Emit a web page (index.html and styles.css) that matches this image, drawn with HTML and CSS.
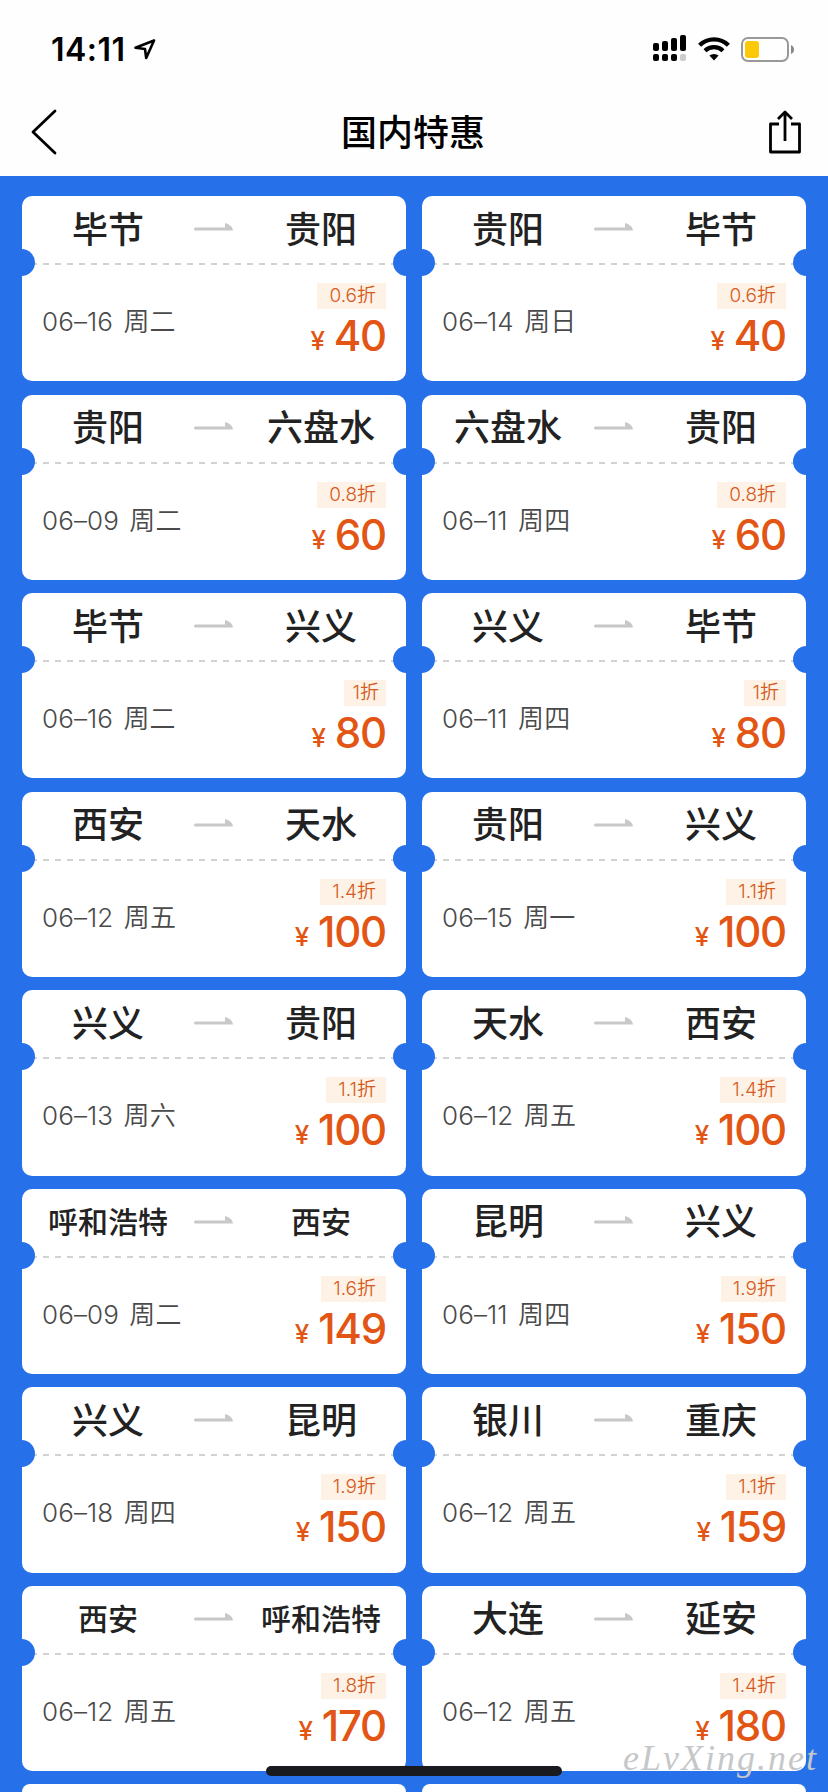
FILE: index.html
```html
<!DOCTYPE html>
<html lang="zh-Hans">
<head>
  <meta charset="UTF-8" />
  <meta name="viewport" content="width=device-width, initial-scale=1" />
  <title>国内特惠</title>
  <link rel="stylesheet" href="styles.css">
</head>
<body>
  <header class="header">
    <div class="status-bar">
      <div class="status-left">
        <span class="time">14:11</span>
        <svg class="location" width="22" height="21" viewBox="0 0 22 21">
          <path d="M20 1.5 L1.5 8.8 L11 10 L12.2 19 Z" fill="none" stroke="#000" stroke-width="2.6" stroke-linejoin="round"/>
        </svg>
      </div>
      <div class="status-right">
        <svg width="34" height="27" viewBox="0 0 34 27">
          <rect x="0" y="8" width="6" height="8" rx="2"/>
          <rect x="9" y="6" width="6" height="10" rx="2"/>
          <rect x="18" y="3" width="6" height="13" rx="2"/>
          <rect x="27" y="0" width="6" height="16" rx="2"/>
          <rect x="0" y="19" width="6" height="7" rx="2"/>
          <rect x="9" y="19" width="6" height="7" rx="2"/>
          <rect x="18" y="19" width="6" height="7" rx="2"/>
          <rect x="27" y="19" width="6" height="7" rx="2" fill="#ccc"/>
        </svg>
        <svg class="wifi" width="32" height="24" viewBox="0 0 32 24">
          <path d="M1.6 8.3 A20.5 20.5 0 0 1 30.4 8.3" fill="none" stroke="#000" stroke-width="4.4"/>
          <path d="M7 13.8 A13 13 0 0 1 25 13.8" fill="none" stroke="#000" stroke-width="4.2"/>
          <path d="M11.4 18.6 A7 7 0 0 1 20.6 18.6 L16 23.4 Z"/>
        </svg>
        <svg class="battery" width="54" height="25" viewBox="0 0 54 25">
          <rect x="1" y="1" width="46" height="23" rx="6" fill="none" stroke="#999" stroke-width="2"/>
          <rect x="4" y="4" width="14" height="17" rx="3" fill="#fbc908"/>
          <path d="M50 8 Q53 9.500 53 12.500 Q53 15.500 50 17 Z" fill="#888"/>
        </svg>
      </div>
    </div>
    <div class="nav">
      <svg width="26" height="46" viewBox="0 0 26 46">
        <path d="M24 2 L2 23 L24 44" fill="none" stroke="#000" stroke-width="2.8" stroke-linecap="round" stroke-linejoin="round"/>
      </svg>
      <h1>国内特惠</h1>
      <svg width="32" height="44" viewBox="0 0 32 44">
        <path d="M10 14 H1.500 V42 H30.500 V14 H22 M16 31 V2 M9 9 L16 2 L23 9" fill="none" stroke="#000" stroke-width="2.8" stroke-linejoin="round"/>
      </svg>
    </div>
  </header>

  <main class="tickets" id="tickets"></main>

  <div class="home-bar"></div>
  <div class="watermark">eLvXing.net</div>

<script>
  const tickets = [
    ['毕节', '贵阳', '06–16 周二', '0.6', 40],
    ['贵阳', '毕节', '06–14 周日', '0.6', 40],
    ['贵阳', '六盘水', '06–09 周二', '0.8', 60],
    ['六盘水', '贵阳', '06–11 周四', '0.8', 60],
    ['毕节', '兴义', '06–16 周二', '1', 80],
    ['兴义', '毕节', '06–11 周四', '1', 80],
    ['西安', '天水', '06–12 周五', '1.4', 100],
    ['贵阳', '兴义', '06–15 周一', '1.1', 100],
    ['兴义', '贵阳', '06–13 周六', '1.1', 100],
    ['天水', '西安', '06–12 周五', '1.4', 100],
    ['呼和浩特', '西安', '06–09 周二', '1.6', 149],
    ['昆明', '兴义', '06–11 周四', '1.9', 150],
    ['兴义', '昆明', '06–18 周四', '1.9', 150],
    ['银川', '重庆', '06–12 周五', '1.1', 159],
    ['西安', '呼和浩特', '06–12 周五', '1.8', 170],
    ['大连', '延安', '06–12 周五', '1.4', 180]
  ];

  const list = document.getElementById('tickets');

  tickets.forEach(([from, to, date, discount, price]) => {
    // 城市名較長時整行縮小字號
    const small = from.length > 3 || to.length > 3 ? ' small' : '';
    const short = discount.length === 1 ? ' short' : '';
    const card = document.createElement('div');
    card.className = 'ticket';
    card.innerHTML = `
      <div class="route${small}">
        <span>${from}</span>
        <svg class="arrow" width="40" height="9" viewBox="0 0 40 9">
          <path d="M1.500 4.500 H31 V0 Q38.500 2 39 7.500 H1.500 A1.500 1.500 0 0 1 1.500 4.500 Z" fill="#c8c8c8"/>
        </svg>
        <span>${to}</span>
      </div>
      <div class="info">
        <span class="date">${date}</span>
        <div class="fare">
          <span class="discount${short}">${discount}折</span>
          <span class="price"><small>¥</small>${price}</span>
        </div>
      </div>
    `;
    list.appendChild(card);
  });

  // 下一行的空卡片
  for (let i = 0; i < 2; i++) {
    const card = document.createElement('div');
    card.className = 'ticket next';
    list.appendChild(card);
  }
</script>
</body>
</html>
```
FILE: styles.css
```css
* {
  box-sizing: border-box;
}

body {
  margin: 0;
  height: 1792px;
  overflow: hidden;
  background-color: #2670e9;
  font-family: Inter, "Noto Sans CJK SC", sans-serif;
}

.header {
  height: 176px;
  background-color: #fefefe;
}

.status-bar {
  display: flex;
  justify-content: space-between;
  height: 88px;
  padding: 35px 33px 0 51px;
}

.status-left,
.status-right {
  display: flex;
  align-items: flex-start;
}

.time {
  font-size: 32px;
  line-height: 30px;
  font-weight: 600;
  letter-spacing: 0.5px;
}

.location {
  margin: 4px 0 0 8px;
}

.wifi {
  margin: 2px 0 0 11px;
}

.battery {
  margin: 2px 0 0 11px;
}

.nav {
  display: flex;
  justify-content: space-between;
  align-items: center;
  height: 88px;
  padding: 0 27px 0 31px;
}

.nav h1 {
  margin: 0 0 4px;
  font-size: 36px;
  font-weight: 500;
}

.tickets {
  display: grid;
  grid-template-columns: 384px 384px;
  grid-template-rows: repeat(8, 185.400px);
  gap: 13.150px 16px;
  height: 1616px;
  padding: 20px 22px 0;
  overflow: hidden;
}

.ticket {
  position: relative;
  background-color: #fff;
  border-radius: 10px;
}

.ticket.next {
  height: 8px;
  border-radius: 10px 10px 0 0;
}

/* 票券兩側的半圓缺口 */
.ticket::before,
.ticket::after {
  content: "";
  position: absolute;
  top: 53px;
  width: 27px;
  height: 27px;
  border-radius: 50%;
  background-color: #2670e9;
}

.ticket.next::before,
.ticket.next::after {
  display: none;
}

.ticket::before {
  left: -14px;
}

.ticket::after {
  right: -14px;
}

.route {
  display: grid;
  grid-template-columns: 1fr 40px 1fr;
  align-items: center;
  justify-items: center;
  height: 69px;
  padding: 0 0 2px 0;
  font-size: 36px;
  line-height: 50px;
  font-weight: 500;
  color: #222;
  background: repeating-linear-gradient(to right, #d2d2d2 0 6px, transparent 6px 12px) 9px 100% / 366px 2px no-repeat;
}

.route.small {
  font-size: 30px;
}

.route span:last-child {
  padding-left: 2px;
}

.arrow {
  margin-bottom: 4px;
}

.info {
  display: flex;
  justify-content: space-between;
  padding: 18px 20px 0;
}

.date {
  margin-top: 21px;
  font-size: 26px;
  line-height: 36px;
  font-weight: 350;
  letter-spacing: 0.1px;
  word-spacing: 3px;
  color: #4a4a4a;
}

.fare {
  display: flex;
  flex-direction: column;
  align-items: flex-end;
}

.discount {
  height: 26px;
  padding: 0 10px 0 12px;
  font-size: 19px;
  line-height: 25px;
  font-weight: 350;
  color: #d65a1e;
  background-color: #fdf2e5;
}

.discount.short {
  padding: 0 7px 0 9px;
}

.price {
  margin-top: 4px;
  font-size: 42px;
  line-height: 46px;
  font-weight: 550;
  letter-spacing: -1.200px;
  color: #e25514;
}

.price small {
  position: relative;
  top: -1px;
  margin-right: 10px;
  font-size: 26px;
}

.home-bar {
  position: absolute;
  left: 266px;
  top: 1766px;
  width: 296px;
  height: 10px;
  border-radius: 5px;
  background-color: #181a1d;
}

.watermark {
  position: absolute;
  left: 623px;
  top: 1741px;
  font-family: "Liberation Serif", serif;
  font-size: 36px;
  line-height: 34px;
  font-style: italic;
  letter-spacing: 2px;
  color: #c6c7c9;
}
```
